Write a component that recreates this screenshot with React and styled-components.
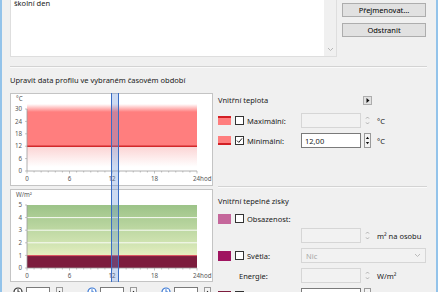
import React from 'react';
import styled, { createGlobalStyle } from 'styled-components';

const GlobalStyle = createGlobalStyle`
  html, body {
    margin: 0;
    padding: 0;
    background: #f0f0f0;
    overflow: hidden;
  }
  body {
    font-family: "Noto Sans", "Open Sans", Arial, sans-serif;
  }
`;

const Window = styled.div`
  width: 438px;
  height: 292px;
  box-sizing: border-box;
  overflow: hidden;
  background: #f0f0f0;
  border-left: 2px solid #93c3ea;
  border-right: 2px solid #93c3ea;
  padding: 0 9px 0 8px;
  font-size: 7.5px;
  color: #1a1a1a;
`;

const TopRow = styled.div`
  display: flex;
  gap: 5px;
  margin-top: -20px;
  height: 77px;
`;

const ListBox = styled.div`
  width: 327px;
  display: flex;
  background: #fff;
  border: 1px solid #dedede;
  box-sizing: border-box;
`;

const ListText = styled.div`
  flex: 1;
  padding: 17px 0 0 3px;
  line-height: 10px;
`;

const ScrollBar = styled.div`
  width: 12px;
  background: #f0f0f0;
  display: flex;
  flex-direction: column;
  justify-content: flex-end;
  align-items: center;
  padding-bottom: 4px;
`;

const ButtonColumn = styled.div`
  width: 84px;
  display: flex;
  flex-direction: column;
  gap: 6px;
  padding-top: 23px;
`;

const Button = styled.button`
  height: 14px;
  box-sizing: border-box;
  border: 1px solid #adadad;
  background: #e1e1e1;
  font: inherit;
  font-size: 7.5px;
  line-height: 12px;
  padding: 0;
  color: #000;
`;

const Separator = styled.div`
  margin-top: ${p => p.$top}px;
  height: 1px;
  background: #d3d3d3;
  border-bottom: 1px solid #fafafa;
`;

const Heading = styled.div`
  margin-top: ${p => p.$top}px;
  line-height: 10px;
  height: 10px;
  white-space: nowrap;
`;

const Main = styled.div`
  display: flex;
  gap: 5px;
  margin-top: 8px;
`;

const ChartColumn = styled.div`
  position: relative;
  width: 203px;
  display: flex;
  flex-direction: column;
  gap: 3px;
`;

const ChartBox = styled.div`
  height: 93px;
  box-sizing: border-box;
  border: 1px solid #c4c4c4;
  background: #fff;
`;

const ChartSvg = styled.svg`
  display: block;
`;

const TimeBand = styled.div`
  position: absolute;
  left: 101px;
  top: 0;
  width: 8px;
  height: 189px;
  box-sizing: border-box;
  border-left: 1px solid #3a6dc4;
  border-right: 1px solid #3a6dc4;
  background: rgba(96, 140, 214, 0.32);
`;

const TimeRow = styled.div`
  display: flex;
  gap: 24px;
  padding-left: 3px;
  margin-top: 2px;
`;

const TimeGroup = styled.div`
  display: flex;
  align-items: flex-start;
  gap: 3px;
`;

const TimeField = styled.div`
  width: 24px;
  height: 14px;
  box-sizing: border-box;
  border: 1px solid #7a7a7a;
  background: #fff;
`;

const Panel = styled.div`
  width: 209px;
  display: flex;
  flex-direction: column;
`;

const PanelHeader = styled.div`
  width: 154px;
  height: 10px;
  margin-top: ${p => p.$top}px;
  display: flex;
  align-items: center;
  justify-content: space-between;
  line-height: 10px;
`;

const ArrowButton = styled.div`
  width: 9px;
  height: 9px;
  box-sizing: border-box;
  border: 1px solid #adadad;
  background: #e1e1e1;
  display: flex;
  align-items: center;
  justify-content: center;
`;

const Row = styled.div`
  display: flex;
  align-items: center;
  height: 15px;
  margin-top: ${p => p.$top}px;
`;

const Swatch = styled.div`
  width: 13px;
  height: ${p => p.$h || 10}px;
  box-sizing: border-box;
  background: ${p => p.$color};
  border-top: ${p => (p.$lineTop ? '2px solid #d21f24' : 'none')};
  border-bottom: ${p => (p.$lineBottom ? '2px solid #d21f24' : 'none')};
  margin-right: 4px;
`;

const CheckBox = styled.div`
  width: 9px;
  height: 9px;
  box-sizing: border-box;
  border: 1px solid #333;
  background: #fff;
  margin-right: 3px;
  display: flex;
  align-items: center;
  justify-content: center;
`;

const Label = styled.div`
  width: ${p => p.$w || 54}px;
  padding-left: ${p => p.$indent || 0}px;
  box-sizing: border-box;
  white-space: nowrap;
`;

const Field = styled.div`
  width: 60px;
  height: 15px;
  box-sizing: border-box;
  border: 1px solid ${p => (p.$active ? '#7a7a7a' : '#d6d6d6')};
  background: ${p => (p.$active ? '#fff' : '#f2f2f2')};
  display: flex;
  align-items: center;
  padding-left: 3px;
  margin-left: ${p => p.$offset || 0}px;
`;

const Select = styled.div`
  width: 125px;
  height: 15px;
  box-sizing: border-box;
  border: 1px solid #d6d6d6;
  background: #f2f2f2;
  color: #a8a8a8;
  display: flex;
  align-items: center;
  justify-content: space-between;
  padding: 0 4px;
`;

const SpinBox = styled.div`
  width: 7px;
  height: 15px;
  margin-left: 3px;
`;

const Unit = styled.div`
  margin-left: 6px;
  white-space: nowrap;
`;

const Spin = ({ active }) => (
  <SpinBox>
    <svg width="7" height="15" viewBox="0 0 7 15">
      {active ? (
        <>
          <rect x="0.5" y="0.5" width="6" height="14" fill="#f4f4f4" stroke="#9a9a9a" />
          <path d="M1.8 6 L3.5 3.8 L5.2 6 Z" fill="#111" />
          <path d="M1.8 9 L3.5 11.2 L5.2 9 Z" fill="#111" />
        </>
      ) : (
        <>
          <path d="M2 5.6 L3.5 4 L5 5.6" fill="none" stroke="#a8a8a8" strokeWidth="0.9" />
          <path d="M2 9.4 L3.5 11 L5 9.4" fill="none" stroke="#a8a8a8" strokeWidth="0.9" />
        </>
      )}
    </svg>
  </SpinBox>
);

const Check = ({ checked }) => (
  <CheckBox>
    {checked && (
      <svg width="7" height="7" viewBox="0 0 7 7">
        <path d="M1 3.6 L2.8 5.4 L6 1.4" fill="none" stroke="#222" strokeWidth="1" />
      </svg>
    )}
  </CheckBox>
);

const Chevron = ({ color = '#a0a0a0' }) => (
  <svg width="7" height="5" viewBox="0 0 7 5">
    <path d="M1 1 L3.5 3.5 L6 1" fill="none" stroke={color} strokeWidth="0.9" />
  </svg>
);

const ClockIcon = ({ color }) => (
  <svg width="10" height="10" viewBox="0 0 10 10">
    <circle cx="5" cy="5" r="4" fill="#fff" stroke={color} strokeWidth="1.2" />
    <path d="M5 2.2 V5 H7" fill="none" stroke={color} strokeWidth="1" />
  </svg>
);

const px = h => 16 + (h * 170) / 24;
const labelFont = { fontFamily: '"Noto Sans", Arial, sans-serif', fontSize: 6.2, fill: '#555' };

const XAxis = ({ y }) => (
  <g>
    <line x1="16" y1={y} x2="186" y2={y} stroke="#9c9c9c" strokeWidth="0.8" />
    {Array.from({ length: 25 }, (_, h) => (
      <line key={h} x1={px(h)} y1={y} x2={px(h)} y2={y + (h % 6 === 0 ? 2.5 : 1.5)} stroke="#9c9c9c" strokeWidth="0.6" />
    ))}
    {[0, 6, 12, 18].map(h => (
      <text key={h} x={px(h)} y={y + 10} textAnchor="middle" style={labelFont}>
        {h}
      </text>
    ))}
    <text x={px(24) - 4} y={y + 10} style={labelFont}>
      24hod
    </text>
  </g>
);

const YAxis = ({ top, bottom, labels }) => (
  <g>
    <line x1="16" y1={top} x2="16" y2={bottom} stroke="#9c9c9c" strokeWidth="0.8" />
    {labels.map((l, i) => {
      const y = bottom - ((bottom - top) * i) / (labels.length - 1);
      return (
        <g key={l}>
          <line x1="14" y1={y} x2="16" y2={y} stroke="#9c9c9c" strokeWidth="0.6" />
          <text x="11" y={y + 2.2} textAnchor="end" style={labelFont}>
            {l}
          </text>
        </g>
      );
    })}
  </g>
);

const TemperatureChart = () => (
  <ChartSvg width="201" height="91" viewBox="0 0 201 91">
    <defs>
      <linearGradient id="redTop" x1="0" y1="10" x2="0" y2="18" gradientUnits="userSpaceOnUse">
        <stop offset="0" stopColor="#ffffff" />
        <stop offset="1" stopColor="#ff7e7e" />
      </linearGradient>
      <linearGradient id="pinkBelow" x1="0" y1="52" x2="0" y2="73" gradientUnits="userSpaceOnUse">
        <stop offset="0" stopColor="#fbd3d3" />
        <stop offset="1" stopColor="#ffffff" />
      </linearGradient>
    </defs>
    <text x="5" y="7" style={labelFont}>
      °C
    </text>
    <rect x="16" y="10" width="170" height="8" fill="url(#redTop)" />
    <rect x="16" y="18" width="170" height="34.2" fill="#ff7e7e" />
    <rect x="16" y="52.2" width="170" height="21" fill="url(#pinkBelow)" />
    <line x1="16" y1="52.2" x2="186" y2="52.2" stroke="#d2282b" strokeWidth="1.4" />
    <YAxis top={15} bottom={77} labels={['0', '6', '12', '18', '24', '30']} />
    <XAxis y={77} />
  </ChartSvg>
);

const GainsChart = () => (
  <ChartSvg width="201" height="91" viewBox="0 0 201 91">
    <defs>
      <linearGradient id="green" x1="0" y1="15" x2="0" y2="65" gradientUnits="userSpaceOnUse">
        <stop offset="0" stopColor="#9cc388" />
        <stop offset="0.85" stopColor="#d6e7b6" />
        <stop offset="1" stopColor="#e6eebf" />
      </linearGradient>
    </defs>
    <text x="5" y="7" style={labelFont}>
      W/m²
    </text>
    <rect x="16" y="15" width="170" height="50.4" fill="url(#green)" />
    {[27.6, 40.2, 52.8].map(y => (
      <line key={y} x1="16" y1={y} x2="186" y2={y} stroke="#fff" strokeWidth="0.9" />
    ))}
    <rect x="16" y="65.4" width="170" height="12.6" fill="#7c1c3d" />
    <line x1="16" y1="65.6" x2="186" y2="65.6" stroke="#e6505c" strokeWidth="0.9" />
    <YAxis top={15} bottom={78} labels={['0', '1', '2', '3', '4', '5']} />
    <XAxis y={78} />
  </ChartSvg>
);

const App = () => (
  <Window>
    <GlobalStyle />
    <TopRow>
      <ListBox>
        <ListText>školní den</ListText>
        <ScrollBar>
          <Chevron color="#b0b0b0" />
        </ScrollBar>
      </ListBox>
      <ButtonColumn>
        <Button>Přejmenovat...</Button>
        <Button>Odstranit</Button>
      </ButtonColumn>
    </TopRow>

    <Separator $top={9} />
    <Heading $top={7}>Upravit data profilu ve vybraném časovém období</Heading>

    <Main>
      <ChartColumn>
        <ChartBox>
          <TemperatureChart />
        </ChartBox>
        <ChartBox>
          <GainsChart />
        </ChartBox>
        <TimeBand />
        <TimeRow>
          {['#333', '#3a78d4', '#3a78d4'].map((c, i) => (
            <TimeGroup key={i}>
              <ClockIcon color={c} />
              <TimeField />
              <Spin active />
            </TimeGroup>
          ))}
        </TimeRow>
      </ChartColumn>

      <Panel>
        <PanelHeader $top={2}>
          <span>Vnitřní teplota</span>
          <ArrowButton>
            <svg width="4" height="5" viewBox="0 0 4 5">
              <path d="M0.5 0 L3.5 2.5 L0.5 5 Z" fill="#111" />
            </svg>
          </ArrowButton>
        </PanelHeader>
        <Row $top={8}>
          <Swatch $color="#ff7e7e" $h={9} $lineTop />
          <Check />
          <Label>Maximální:</Label>
          <Field />
          <Spin />
          <Unit>°C</Unit>
        </Row>
        <Row $top={5}>
          <Swatch $color="#ff7e7e" $h={9} $lineBottom />
          <Check checked />
          <Label>Minimální:</Label>
          <Field $active>12,00</Field>
          <Spin active />
          <Unit>°C</Unit>
        </Row>

        <Separator $top={38} />
        <PanelHeader $top={8}>
          <span>Vnitřní tepelné zisky</span>
        </PanelHeader>
        <Row $top={5}>
          <Swatch $color="#c5679b" />
          <Check />
          <Label>Obsazenost:</Label>
        </Row>
        <Row $top={2}>
          <Field $offset={83} />
          <Spin />
          <Unit>m² na osobu</Unit>
        </Row>
        <Row $top={5}>
          <Swatch $color="#a01460" />
          <Check />
          <Label>Světla:</Label>
          <Select>
            <span>Nic</span>
            <Chevron color="#b4b4b4" />
          </Select>
        </Row>
        <Row $top={5}>
          <Label $w={83} $indent={21}>
            Energie:
          </Label>
          <Field />
          <Spin />
          <Unit>W/m²</Unit>
        </Row>
        <Row $top={5}>
          <Swatch $color="#7c1c3d" />
          <Check />
          <Label />
          <Field $active />
          <Spin active />
        </Row>
      </Panel>
    </Main>
  </Window>
);

export default App;
